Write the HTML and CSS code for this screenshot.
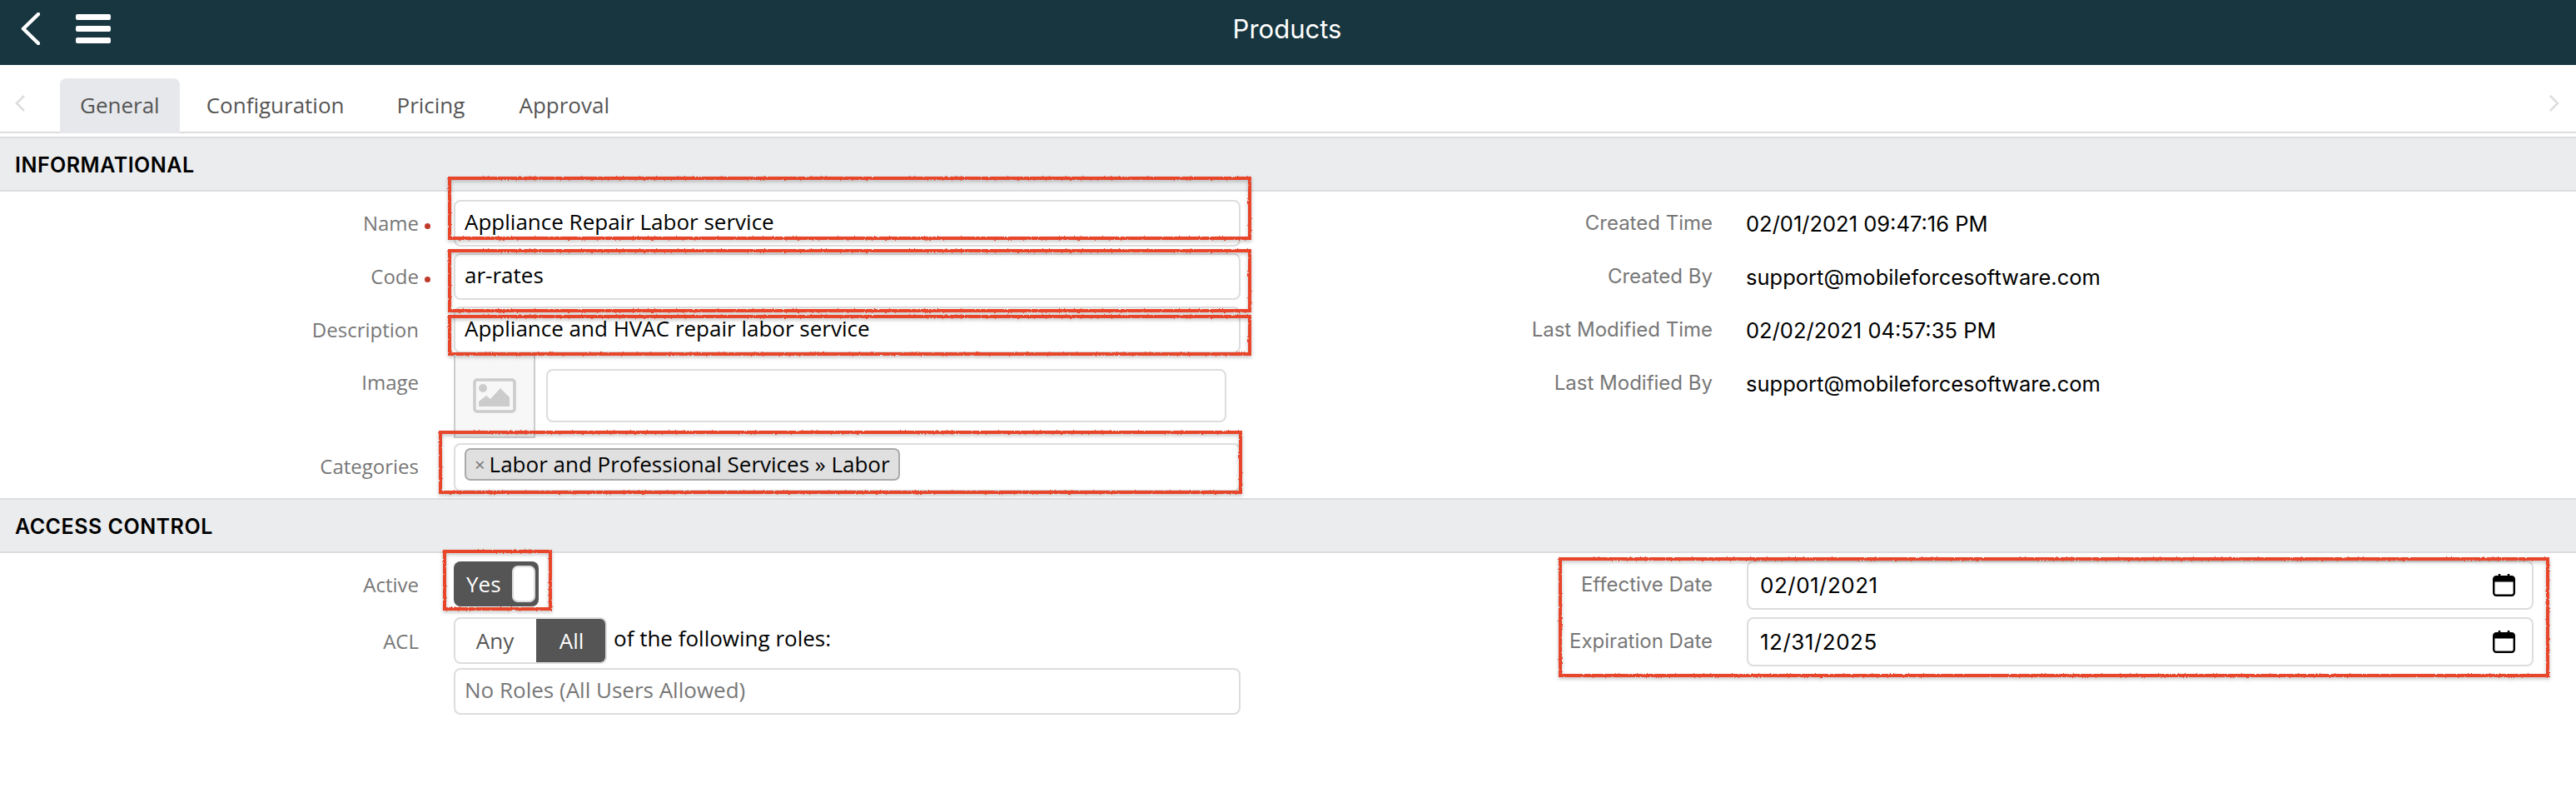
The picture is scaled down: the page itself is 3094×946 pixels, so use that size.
FILE: index.html
```html
<!DOCTYPE html>
<html lang="en">
<head>
  <meta charset="UTF-8" />
  <title>Products</title>
  <link rel="stylesheet" href="styles.css">
</head>
<body>
  <div id="topbar">
    <svg class="back" viewBox="0 0 23 39"><path d="M21 2 L3 19.5 L21 37" fill="none" stroke="#fff" stroke-width="4.5" stroke-linecap="round" stroke-linejoin="round"></path></svg>
    <div class="burger"><span></span><span></span><span></span></div>
    <div id="title">Products</div>
  </div>

  <div id="tabs">
    <svg class="tab-arrow" viewBox="0 0 12 20"><path d="M11 1 L2 10 L11 19" fill="none" stroke="#ddd" stroke-width="2.5"></path></svg>
    <ul id="tablist">
      <li class="active">General</li>
      <li>Configuration</li>
      <li>Pricing</li>
      <li>Approval</li>
    </ul>
    <svg class="tab-arrow" viewBox="0 0 12 20"><path d="M1 1 L10 10 L1 19" fill="none" stroke="#ddd" stroke-width="2.5"></path></svg>
  </div>

  <div class="section-head">INFORMATIONAL</div>
  <div class="columns info">
    <div class="col">
      <div class="row">
        <label>Name<i class="req"></i></label>
        <input class="field" type="text" value="Appliance Repair Labor service" />
      </div>
      <div class="row">
        <label>Code<i class="req"></i></label>
        <input class="field" type="text" value="ar-rates" />
      </div>
      <div class="row">
        <label>Description</label>
        <input class="field" type="text" value="Appliance and HVAC repair labor service" />
      </div>
      <div class="row image-row">
        <label>Image</label>
        <div class="thumb">
          <svg viewBox="0 0 52 42"><rect x="2" y="2" width="48" height="38" rx="3" fill="#f7f7f7" stroke="#ccc" stroke-width="3.5"></rect><circle cx="12" cy="12" r="5" fill="#ccc"></circle><path d="M7 34 V28 L16 21 L21 25 L33 12 L44 23 V34 Z" fill="#ccc"></path></svg>
        </div>
        <input class="field image-input" type="text" />
      </div>
      <div class="row cat-row">
        <label>Categories</label>
        <div class="field chips">
          <span class="chip"><b>×</b>Labor and Professional Services » Labor</span>
        </div>
      </div>
    </div>
    <div class="col meta">
      <div class="row"><label>Created Time</label><span class="value">02/01/2021 09:47:16 PM</span></div>
      <div class="row"><label>Created By</label><span class="value">support@mobileforcesoftware.com</span></div>
      <div class="row"><label>Last Modified Time</label><span class="value">02/02/2021 04:57:35 PM</span></div>
      <div class="row"><label>Last Modified By</label><span class="value">support@mobileforcesoftware.com</span></div>
    </div>
  </div>

  <div class="section-head">ACCESS CONTROL</div>
  <div class="columns access">
    <div class="col">
      <div class="row toggle-row">
        <label>Active</label>
        <div class="toggle"><span>Yes</span><i></i></div>
      </div>
      <div class="row acl-row">
        <label>ACL</label>
        <div class="segment"><span>Any</span><span class="on">All</span></div>
        <span class="acl-text">of the following roles:</span>
      </div>
      <div class="row roles-row">
        <label></label>
        <input class="field" type="text" placeholder="No Roles (All Users Allowed)" />
      </div>
    </div>
    <div class="col dates">
      <div class="row">
        <label>Effective Date</label>
        <div class="field date"><span>02/01/2021</span>
          <svg viewBox="0 0 27 27"><path d="M8 0 V4 M19 0 V4" stroke="#000" stroke-width="2.5"></path><rect x="1.2" y="3.2" width="24.6" height="22.6" rx="3" fill="none" stroke="#000" stroke-width="2.4"></rect><rect x="2" y="4" width="23" height="5.5" fill="#000"></rect></svg>
        </div>
      </div>
      <div class="row">
        <label>Expiration Date</label>
        <div class="field date"><span>12/31/2025</span>
          <svg viewBox="0 0 27 27"><path d="M8 0 V4 M19 0 V4" stroke="#000" stroke-width="2.5"></path><rect x="1.2" y="3.2" width="24.6" height="22.6" rx="3" fill="none" stroke="#000" stroke-width="2.4"></rect><rect x="2" y="4" width="23" height="5.5" fill="#000"></rect></svg>
        </div>
      </div>
    </div>
  </div>

  <!-- red review marks drawn over the form -->
  <svg class="filters" aria-hidden="true">
    <filter id="rough" x="-2%" y="-10%" width="104%" height="120%">
      <feTurbulence type="fractalNoise" baseFrequency="0.5" numOctaves="2" seed="3"></feTurbulence>
      <feDisplacementMap in="SourceGraphic" scale="2.5"></feDisplacementMap>
    </filter>
  </svg>
  <div class="mark m-name"></div>
  <div class="mark m-code"></div>
  <div class="mark m-desc"></div>
  <div class="mark m-cat"></div>
  <div class="mark m-toggle"></div>
  <div class="mark m-dates"></div>
</body>
</html>
```

FILE: styles.css
```css
* {
  box-sizing: border-box;
}

html, body {
  height: 100%;
  margin: 0;
  font-family: 'Open Sans', sans-serif;
  background: #fff;
  color: #000;
}

body {
  position: relative;
  overflow: hidden;
}

/* Top bar */
#topbar {
  position: relative;
  display: flex;
  align-items: center;
  height: 78px;
  padding-left: 25px;
  background-color: #17363f;
}

.back {
  width: 23px;
  height: 39px;
  margin-top: -9px;
}

.burger {
  display: flex;
  flex-direction: column;
  gap: 7px;
  width: 42px;
  margin-left: 43px;
  margin-top: -9px;
}

.burger span {
  height: 7px;
  border-radius: 2px;
  background: #fff;
}

#title {
  position: absolute;
  left: 0;
  right: 2px;
  top: 16px;
  text-align: center;
  color: #fff;
  font-family: 'Inter', sans-serif;
  font-size: 31px;
  line-height: 38px;
}

/* Tabs */
#tabs {
  display: flex;
  align-items: center;
  justify-content: space-between;
  height: 82px;
  padding: 0 20px 0 18px;
  border-bottom: 2px solid #ddd;
}

.tab-arrow {
  width: 12px;
  height: 20px;
  margin-top: 12px;
}

#tablist {
  display: flex;
  flex: 1;
  align-self: flex-end;
  list-style: none;
  margin: 0 0 -2px 42px;
  padding: 0;
  gap: 15px;
}

#tablist li {
  height: 66px;
  padding: 0 24px;
  font-size: 26px;
  line-height: 64px;
  color: #555;
  border-radius: 8px 8px 0 0;
}

#tablist li:last-child {
  margin-left: 2px;
}

#tablist li.active {
  margin-right: -7px;
  background-color: #e6e8ec;
}

/* Sections */
.section-head {
  height: 66px;
  margin-top: 4px;
  padding-left: 18px;
  background-color: #ebecee;
  border-top: 2px solid #ddd;
  border-bottom: 2px solid #ddd;
  font-family: 'Inter', sans-serif;
  font-size: 25px;
  font-weight: 600;
  letter-spacing: 0.5px;
  line-height: 64px;
}

.columns {
  display: grid;
  grid-template-columns: 1547px 1547px;
}

.info {
  height: 368px;
  padding-top: 10px;
}

.section-head + .columns + .section-head {
  margin-top: 0;
}

.row {
  display: flex;
  align-items: center;
  gap: 42px;
  min-height: 56px;
  margin-bottom: 8px;
}

label {
  position: relative;
  flex-shrink: 0;
  width: 503px;
  padding-bottom: 2px;
  text-align: right;
  font-size: 24px;
  color: #777;
}

.req {
  position: absolute;
  left: 100%;
  top: 17px;
  width: 7px;
  height: 7px;
  margin-left: 7px;
  border-radius: 50%;
  background: #c0392b;
}

.field {
  display: block;
  flex: none;
  width: 945px;
  height: 56px;
  padding: 0 11px 5px;
  font-family: inherit;
  font-size: 26px;
  color: #000;
  background: #fff;
  border: 2px solid #ddd;
  border-radius: 8px;
  outline: none;
}

.field::placeholder {
  color: #777;
  opacity: 1;
}

.image-row {
  gap: 0;
  margin-top: -8px;
  margin-bottom: 6px;
}

.image-row label {
  margin-right: 42px;
  margin-top: -32px;
}

.thumb {
  display: flex;
  align-items: center;
  justify-content: center;
  width: 98px;
  height: 102px;
  background: #f7f7f7;
  border: 2px solid #ccc;
}

.thumb svg {
  width: 52px;
  height: 42px;
}

.image-input {
  width: 817px;
  height: 64px;
  margin-left: 13px;
}

.cat-row label {
  padding-bottom: 4px;
}

.cat-row .field {
  height: 58px;
  padding-bottom: 8px;
}

.chips {
  display: flex;
  align-items: center;
}

.chip {
  display: inline-flex;
  align-items: center;
  height: 39px;
  padding: 0 10px;
  background: #e0e0e0;
  border: 2px solid #aaa;
  border-radius: 7px;
  font-size: 26px;
  white-space: nowrap;
}

.chip b {
  margin-right: 5px;
  font-weight: 400;
  font-size: 22px;
  color: #777;
}

/* Read only values on the right */
.meta {
  padding-top: 13px;
}

.meta .row {
  gap: 40px;
  min-height: 28px;
  margin-bottom: 33px;
}

.meta label,
.dates label {
  width: 510px;
  font-family: 'Inter', sans-serif;
  font-size: 24px;
}

.value {
  font-family: 'Inter', sans-serif;
  font-size: 25.5px;
}

/* Access control */
.access {
  padding-top: 10px;
}

.toggle-row {
  min-height: 54px;
  margin-bottom: 13px;
}

.toggle-row label,
.acl-row label {
  padding-bottom: 0;
}

.toggle {
  position: relative;
  display: flex;
  align-items: center;
  width: 102px;
  height: 54px;
  padding-left: 15px;
  background: #555;
  border-radius: 8px;
  color: #fff;
  font-size: 26px;
}

.toggle i {
  position: absolute;
  right: 4px;
  top: 5px;
  width: 28px;
  height: 44px;
  background: #fff;
  border: 2px solid #ddd;
  border-radius: 7px;
}

.acl-row {
  min-height: 56px;
  margin-bottom: 5px;
}

.segment {
  display: flex;
  width: 184px;
  height: 56px;
  border: 2px solid #ddd;
  border-radius: 8px;
  overflow: hidden;
  font-size: 26px;
  margin-right: -34px;
}

.segment span {
  display: flex;
  align-items: center;
  justify-content: center;
  width: 97px;
  padding-right: 2px;
  color: #555;
}

.segment .on {
  width: 85px;
  margin-right: -2px;
  padding-right: 0;
  background: #555;
  color: #fff;
}

.acl-text {
  font-size: 26px;
  margin-top: -6px;
}

.dates .row {
  gap: 41px;
  min-height: 59px;
  margin-bottom: 9px;
}

.dates {
  margin-top: -1px;
}

.date {
  display: flex;
  align-items: center;
  justify-content: space-between;
  width: 945px;
  height: 59px;
  padding: 0 20px 0 14px;
  font-family: 'Inter', sans-serif;
  font-size: 26px;
  letter-spacing: 0.5px;
}

.date svg {
  width: 27px;
  height: 27px;
}

/* Red review marks */
.filters {
  position: absolute;
  width: 0;
  height: 0;
}

.mark {
  position: absolute;
  border: 4px solid #e8452a;
  filter: url(#rough) drop-shadow(0 2px 2px rgb(0 0 0 / 0.25));
}

.m-name { left: 538px; top: 212px; width: 965px; height: 76px; }
.m-code { left: 538px; top: 299px; width: 965px; height: 76px; }
.m-desc { left: 538px; top: 378px; width: 965px; height: 49px; }
.m-cat { left: 527px; top: 517px; width: 965px; height: 76px; }
.m-toggle { left: 532px; top: 660px; width: 131px; height: 73px; }
.m-dates { left: 1872px; top: 669px; width: 1190px; height: 144px; }
```
